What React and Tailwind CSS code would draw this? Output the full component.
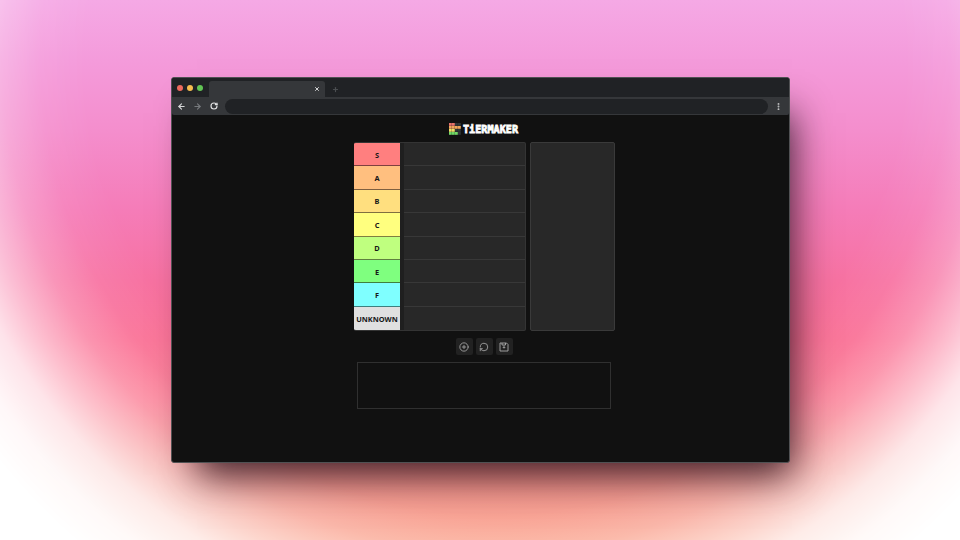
import { CirclePlus, RotateCcw, ArrowLeft, ArrowRight, RotateCw, X, Plus, EllipsisVertical } from "lucide-react";

const tiers = [
  ["S", "bg-[#ff7f7f]"],
  ["A", "bg-[#ffbf7f]"],
  ["B", "bg-[#ffdf7f]"],
  ["C", "bg-[#ffff7f]"],
  ["D", "bg-[#bfff7f]"],
  ["E", "bg-[#7fff7f]"],
  ["F", "bg-[#7fffff]"],
  ["UNKNOWN", "bg-[#e0e0e0]"],
];

function Backdrop() {
  return (
    <div className="absolute inset-0 bg-white">
      <div className="h-full w-full bg-[linear-gradient(180deg,#f5a9e5_0px,#f49bdb_60px,#f48ecd_130px,#f57cb8_210px,#f772a2_280px,#fa7095_340px,#fb7a92_400px,#f58d88_470px,#faa48f_540px)] [mask-image:radial-gradient(circle_640px_at_495px_60px,#000_64%,rgba(0,0,0,.93)_71%,rgba(0,0,0,.75)_77%,rgba(0,0,0,.46)_83%,rgba(0,0,0,.2)_88%,rgba(0,0,0,.06)_94%,transparent_100%)]" />
    </div>
  );
}

function Logo() {
  const rows = [
    ["#e8736b", "#e8736b", "#303638", "#303638"],
    ["#efa65c", "#efa65c", "#efa65c", "#efa65c"],
    ["#f0df68", "#f0df68", "#303638", "#303638"],
    ["#70d766", "#70d766", "#70d766", "#303638"],
  ];
  return (
    <div className="flex h-3 items-center gap-[2px]">
      <svg width="12" height="12" viewBox="0 0 12 12">
        {rows.map((r, y) => r.map((c, x) => <rect key={`${x}-${y}`} x={x * 3} y={y * 3} width="2.8" height="2.8" fill={c} />))}
      </svg>
      <svg width="56" height="18" viewBox="0 0 56 18" className="-my-[3px] shrink-0 overflow-visible">
        <text x="0" y="13" textLength="55" lengthAdjust="spacingAndGlyphs" fill="#fff" stroke="#fff" strokeWidth=".8" fontFamily="DejaVu Sans Mono, monospace" fontWeight="700" fontSize="11">TiERMAKER</text>
      </svg>
    </div>
  );
}

function BrowserChrome() {
  return (
    <header className="h-[37px] bg-[#202225]">
      <div className="flex h-[19px] items-end">
        <div className="flex h-full w-[37px] items-center gap-1 pl-[5px]">
          <span className="size-1.5 rounded-full bg-[#ed6a5e]" />
          <span className="size-1.5 rounded-full bg-[#f5bd4f]" />
          <span className="size-1.5 rounded-full bg-[#61c454]" />
        </div>
        <div className="flex h-4 w-[116px] items-center justify-end rounded-t-[3px] bg-[#35373a] pr-[5px]">
          <X size={6} strokeWidth={4} className="text-[#d4d5d6]" />
        </div>
        <div className="flex h-4 items-center pl-[7px]">
          <Plus size={7} strokeWidth={4} className="text-[#4b4e51]" />
        </div>
      </div>
      <div className="flex h-[18px] items-center bg-[#35373a] pl-[5px]">
        <ArrowLeft size={9} strokeWidth={3} className="text-[#d6d7d8]" />
        <ArrowRight size={9} strokeWidth={3} className="ml-[7px] text-[#777a7d]" />
        <RotateCw size={8} strokeWidth={3.5} className="ml-[8px] text-[#e0e1e2]" />
        <div className="ml-[7px] h-[15px] w-[543px] rounded-full bg-[#202225]" />
        <EllipsisVertical size={9} strokeWidth={3} className="ml-[6px] text-[#c7c8c9]" />
      </div>
    </header>
  );
}

function SaveIcon({ className }) {
  return (
    <svg width="10" height="10" viewBox="0 0 20 20" fill="none" stroke="currentColor" strokeWidth="1.8" strokeLinejoin="round" className={className}>
      <path d="M2 2h13l3 3v13H2zM6 2v4h7V2M10 7v5M7.5 10l2.5 2.5 2.5-2.5" />
    </svg>
  );
}

function Action({ children }) {
  return (
    <button className="flex size-[17px] items-center justify-center rounded-[2px] bg-[#222] text-[#aaa]">
      {children}
    </button>
  );
}

export default function App() {
  return (
    <main className="relative flex h-[540px] w-[960px] items-start overflow-hidden pl-[171px] pt-[77px] font-['Noto_Sans',sans-serif]">
      <Backdrop />
      <section className="relative h-[386px] w-[619px] rounded-[3px] border border-[#505153] bg-[#111] shadow-[14px_24px_36px_-12px_rgba(25,10,20,.85)]">
        <div className="overflow-hidden rounded-[2px]"><BrowserChrome /></div>
        <div className="flex flex-col items-center pl-[7px] pt-[8px]">
          <Logo />
          <div className="mt-[7px] flex gap-1 pl-px">
            <div className="h-[189px] w-[172px] overflow-hidden rounded-[2px] border border-l-0 border-[#343434] bg-[#282828]">
              {tiers.map(([name, color]) => (
                <div key={name} className="group flex h-[23.4px]">
                  <div className={`${color} flex w-[46px] shrink-0 items-center justify-center whitespace-nowrap border-b border-black/50 pt-[2px] text-[7.4px] font-bold text-[#171717] group-last:border-b-0`}>{name}</div>
                  <div className="w-1 bg-[#1f1f1f]" />
                  <div className="flex-1 border-b border-[#383838] group-last:border-b-0" />
                </div>
              ))}
            </div>
            <div className="h-[189px] w-[85px] rounded-[2px] border border-[#3a3a3a] bg-[#282828]" />
          </div>
          <div className="mt-[7px] flex gap-[3px]">
            <Action><CirclePlus size={10} /></Action>
            <Action><RotateCcw size={10} className="-scale-y-100" /></Action>
            <Action><SaveIcon /></Action>
          </div>
          <div className="mt-[7px] h-[47px] w-[254px] border border-[#303030]" />
        </div>
      </section>
    </main>
  );
}
